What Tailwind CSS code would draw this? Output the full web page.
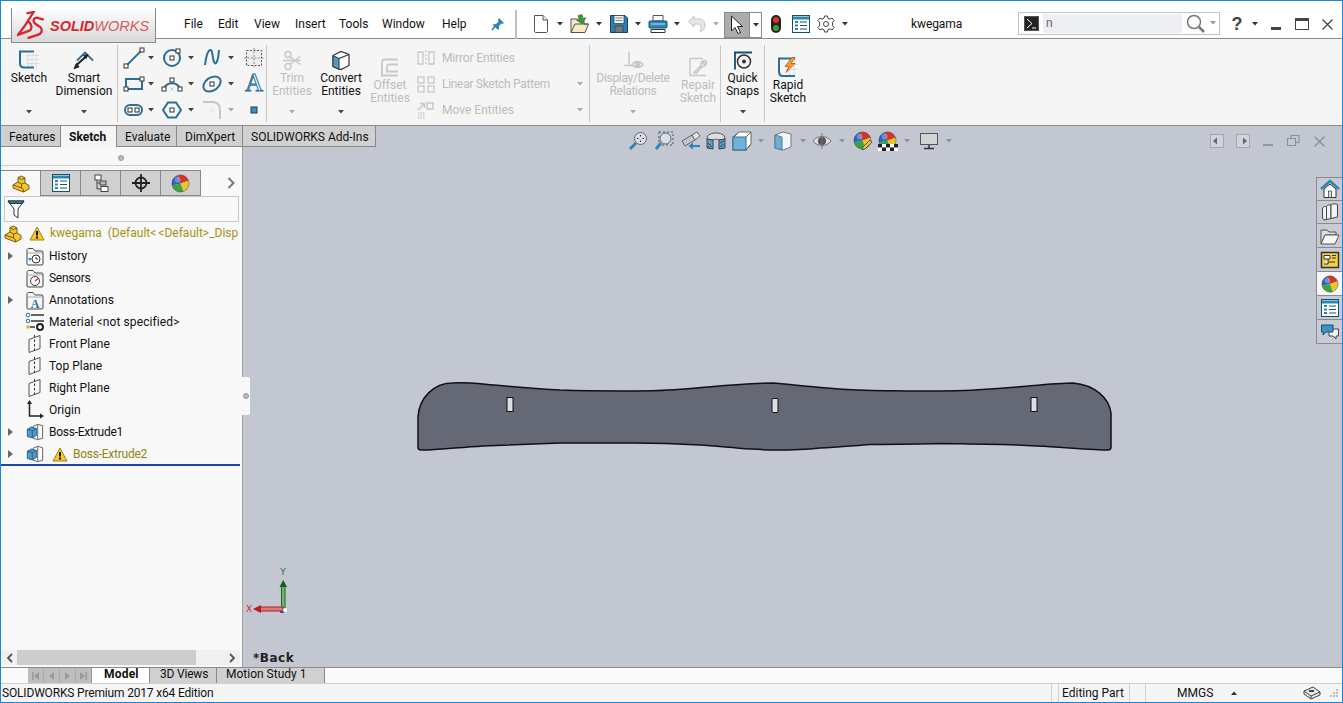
<!DOCTYPE html>
<html lang="en">
<head>
<meta charset="UTF-8" />
<title>SOLIDWORKS Premium 2017 x64 Edition</title>
<script src="https://cdn.jsdelivr.net/npm/@tailwindcss/browser@4"></script>
</head>
<body class="bg-white overflow-hidden">

<!-- shared icons -->
<svg class="hidden">
  <symbol id="caret" viewBox="0 0 6 4"><path d="M0 0H6L3 3.5Z" fill="currentColor"/></symbol>
  <symbol id="ball" viewBox="0 0 20 20">
    <path d="M10 10L1.200 12A9 9 0 0 1 7 1.500Z" fill="#2f62c4"/>
    <path d="M10 10L7 1.500A9 9 0 0 1 18.500 7Z" fill="#d5332c"/>
    <path d="M10 10L18.500 7A9 9 0 0 1 13 18.500Z" fill="#e8c828"/>
    <path d="M10 10L13 18.500A9 9 0 0 1 1.200 12Z" fill="#3ea33c"/>
    <circle cx="10" cy="10" r="9" fill="none" stroke="#333" stroke-opacity=".45"/>
    <circle cx="7" cy="6" r="3" fill="#fff" opacity=".3"/>
  </symbol>
  <symbol id="plane" viewBox="0 0 18 20"><path d="M3 5.500L14 1.500V14.500L3 18.500Z" fill="none" stroke="#555"/><path d="M8.500 1V19" stroke="#333" stroke-dasharray="2.500 2"/></symbol>
  <symbol id="boss" viewBox="0 0 20 20">
    <path d="M8 3.500L13 1.500L18.500 3V17L13 18.500L8 17Z" fill="#fff" stroke="#555"/><path d="M13 2V18" stroke="#555"/>
    <path d="M1.500 7L6 4.500L11.500 6V14L7 16.500L1.500 15Z" fill="#4f9cc8" stroke="#1f5b80"/><path d="M1.500 7L7 8.500L11.500 6M7 8.500V16.500" fill="none" stroke="#1f5b80"/>
  </symbol>
  <symbol id="warn" viewBox="0 0 16 15"><path d="M8 1L15 14H1Z" fill="#f6c928" stroke="#a5801a" stroke-linejoin="round"/><path d="M8 5V9.500" stroke="#111" stroke-width="2"/><path d="M8 10.500V12.500" stroke="#111" stroke-width="2"/></symbol>
  <symbol id="part" viewBox="0 0 18 18"><path d="M1 10L6 7V2.500L9.500 1L13 3V8L17 10.500V14L11.500 17L1 13Z" fill="#f3c62f" stroke="#7a5a10" stroke-linejoin="round"/><path d="M6 7L9.500 9L13 8M9.500 9V13L11.500 14.500V17M1 10L9.500 13M6 2.500L9.500 4.500L13 3" fill="none" stroke="#7a5a10"/></symbol>
  <symbol id="folder" viewBox="0 0 18 19"><path d="M1 3.500C1 2 2 1.500 3 1.500H7L9 4H16C16.500 4 17 4.500 17 5V17C17 17.500 16.500 18 16 18H2C1.500 18 1 17.500 1 17Z" fill="#f7f7f7" stroke="#444"/><path d="M2 6H16" stroke="#aaa"/></symbol>
  <symbol id="list" viewBox="0 0 18 18"><rect x=".5" y=".5" width="17" height="17" fill="#fff" stroke="#16506f"/><path d="M1 3H17" stroke="#2c86b5" stroke-width="3"/><path d="M3 7H6M3 10.500H6M3 14H6" stroke="#2c86b5" stroke-width="2"/><path d="M8 7H15M8 10.500H15M8 14H15" stroke="#16506f"/></symbol>
</svg>

<div class="relative w-[1343px] h-[703px] flex flex-col border border-[#1a86d8] overflow-hidden text-[12px] leading-[13px] text-[#111] font-['Roboto',sans-serif]">

  <!-- Logo tab -->
  <div class="absolute left-[10px] top-[7px] w-[145px] h-[35px] z-10 flex items-center border-x border-b border-[#8a8a8a] bg-gradient-to-b from-white to-[#d9d9d9] pl-[5px]">
    <svg class="w-[28px] h-[29px] shrink-0" viewBox="0 0 27 28" fill="none" stroke="#d7262c" stroke-width="2.200" stroke-linecap="round">
      <path d="M10 2L16 1L7 15L1 23L12 19C15 17 14.500 13 11 10"/>
      <path d="M25 8L19 6.500C15.500 7 15 10.500 18 12.500L23 16C25 19 23.500 22 20 23L11 26"/>
    </svg>
    <span class="ml-[5px] mt-[2px] text-[14.500px] leading-none italic text-[#d7262c] font-['Liberation_Sans',sans-serif] whitespace-nowrap"><b class="font-bold">SOLID</b><span class="text-[#d65b5e]">WORKS</span></span>
  </div>

  <!-- Title bar -->
  <header class="h-[38px] shrink-0 flex items-center border-b border-[#8c8c8c] bg-white pl-[183px] pt-[9px]">
    <nav class="flex">
      <span class="w-[34px]">File</span><span class="w-[36px]">Edit</span><span class="w-[41px]">View</span><span class="w-[44px]">Insert</span><span class="w-[43px]">Tools</span><span class="w-[60px]">Window</span><span class="w-[49px]">Help</span>
    </nav>
    <svg class="w-[14px] h-[14px] shrink-0" viewBox="0 0 14 14" fill="#2a86b8"><path d="M8 1L13 6L11.500 7L10.500 6.500L8 9V12L6.500 12.500L1.500 7.500L5 7L7.500 4.500L7 3Z"/><path d="M4 9L1 13" stroke="#2a86b8" stroke-width="1.500"/></svg>
    <div class="w-[2px] h-[29px] ml-[10px] bg-[#c0c0c0]"></div>

    <!-- New -->
    <svg class="w-[20px] h-[20px] ml-[14px] shrink-0" viewBox="0 0 20 20"><path d="M3.500 1.500H12L16.500 6V17C16.500 18 16 18.500 15 18.500H5C4 18.500 3.500 18 3.500 17Z" fill="#fff" stroke="#555"/><path d="M12 1.500V6H16.500" fill="#eee" stroke="#555"/></svg>
    <svg class="w-[6px] h-[4px] ml-[6px] mr-[7px] text-[#333] shrink-0"><use href="#caret"/></svg>
    <!-- Open -->
    <svg class="w-[20px] h-[20px] shrink-0" viewBox="0 0 20 20"><path d="M1 5H7L8.500 7H14V10H18.500L15 18.500H1Z" fill="#f5e9c6" stroke="#555"/><path d="M1 18.500L5 10H18.500" fill="none" stroke="#555"/><path d="M9 1H13V5H16L11 10L6.500 5H9Z" transform="rotate(-15 11 5)" fill="#3f9a2b" stroke="#24691b" stroke-width=".6"/></svg>
    <svg class="w-[6px] h-[4px] ml-[6px] mr-[7px] text-[#333] shrink-0"><use href="#caret"/></svg>
    <!-- Save -->
    <svg class="w-[20px] h-[20px] shrink-0" viewBox="0 0 20 20"><path d="M1.500 1.500H16L18.500 4V18.500H1.500Z" fill="#2f7fae" stroke="#15425e"/><rect x="5" y="1.500" width="10" height="8" fill="#f1f1f1" stroke="#15425e" stroke-width=".7"/><path d="M6.500 4H13.500M6.500 6.500H13.500" stroke="#888"/><rect x="6" y="12" width="8" height="6.500" fill="#777" stroke="#15425e" stroke-width=".7"/></svg>
    <svg class="w-[6px] h-[4px] ml-[6px] mr-[7px] text-[#333] shrink-0"><use href="#caret"/></svg>
    <!-- Print -->
    <svg class="w-[20px] h-[20px] shrink-0" viewBox="0 0 20 20"><path d="M5 1.500H15V7H5Z" fill="#fff" stroke="#555"/><rect x="1" y="7" width="18" height="7" rx="1" fill="#2f86b8" stroke="#17506f"/><path d="M3 15.500H17V18.500H3Z" fill="#fff" stroke="#333"/><path d="M3 10H17" stroke="#bfe0f0"/></svg>
    <svg class="w-[6px] h-[4px] ml-[6px] mr-[7px] text-[#333] shrink-0"><use href="#caret"/></svg>
    <!-- Undo, disabled -->
    <svg class="w-[20px] h-[20px] shrink-0" viewBox="0 0 20 20" fill="none"><path d="M7 5H12C16 5 18 8 18 11C18 14 16 17 13 17.500C15 14 14 10 11 10H7V13L1.500 7.500L7 2Z" fill="#e6e6e6" stroke="#c4c4c4"/></svg>
    <svg class="w-[6px] h-[4px] ml-[6px] text-[#aaa] shrink-0"><use href="#caret"/></svg>

    <!-- Select -->
    <div class="flex h-[26px] w-[38px] ml-[5px] mt-[1px] border border-[#8a8a8a] shrink-0">
      <div class="w-[25px] bg-[#acacac] flex items-center justify-center border-r border-[#8a8a8a]">
        <svg class="w-[14px] h-[20px]" viewBox="0 0 14 20"><path d="M1.500 1V16L5 12.500L8 18.500L10.500 17.500L7.500 11.500H12.500Z" fill="#fff" stroke="#222"/></svg>
      </div>
      <div class="flex-1 bg-white flex items-center justify-center"><svg class="w-[6px] h-[4px] text-[#333]"><use href="#caret"/></svg></div>
    </div>
    <!-- Rebuild light -->
    <svg class="w-[20px] h-[20px] ml-[4px] shrink-0" viewBox="0 0 20 20"><rect x="5" y="1" width="10" height="18" rx="5" fill="#222"/><circle cx="10" cy="6" r="3" fill="#e2312b"/><circle cx="10" cy="14" r="3" fill="#3d9c33"/></svg>
    <svg class="w-[18px] h-[18px] ml-[6px] shrink-0"><use href="#list"/></svg>
    <!-- Options gear -->
    <svg class="w-[18px] h-[18px] ml-[7px] shrink-0" viewBox="0 0 18 18" fill="none" stroke="#444"><circle cx="9" cy="9" r="2.500"/><path d="M7.500 1H10.500L11 3.300L13 4.200L15 3L17 5.500L15.500 7.300V10.700L17 12.500L15 15L13 13.800L11 14.700L10.500 17H7.500L7 14.700L5 13.800L3 15L1 12.500L2.500 10.700V7.300L1 5.500L3 3L5 4.200L7 3.300Z" stroke-linejoin="round"/></svg>
    <svg class="w-[6px] h-[4px] ml-[7px] text-[#333] shrink-0"><use href="#caret"/></svg>

    <span class="w-[49px] ml-[63px] shrink-0 tracking-[-0.1px]">kwegama</span>

    <!-- Search -->
    <div class="w-[202px] h-[23px] ml-[58px] mb-[2px] flex items-center border border-[#c4c4c4] pl-[5px] shrink-0">
      <div class="w-[15px] h-[15px] bg-[#222] border border-[#555] flex items-center justify-center">
        <svg class="w-[13px] h-[13px]" viewBox="0 0 13 13" fill="none" stroke="#fff"><path d="M2 2L7 6.500L2 11"/><path d="M7 11H11"/></svg>
      </div>
      <div class="w-[139px] h-[19px] ml-[4px] bg-[#eceef2] pl-[3px] text-[#666] leading-[18px]">n</div>
      <svg class="w-[19px] h-[19px] ml-[4px]" viewBox="0 0 19 19" fill="none" stroke="#777"><circle cx="8" cy="8" r="6.500" stroke-width="1.500"/><path d="M13 13L18 18" stroke-width="2.500"/></svg>
      <svg class="w-[6px] h-[4px] ml-[5px] text-[#999]"><use href="#caret"/></svg>
    </div>
    <span class="w-[18px] ml-[8px] text-center text-[18px] leading-none font-bold text-[#444] font-['Liberation_Sans',sans-serif] shrink-0">?</span>
    <svg class="w-[6px] h-[4px] ml-[6px] text-[#333] shrink-0"><use href="#caret"/></svg>
    <div class="w-[10px] h-[3px] ml-[13px] mt-[9px] bg-[#444] shrink-0"></div>
    <div class="w-[14px] h-[12px] ml-[14px] border border-[#444] border-t-[3px] shrink-0"></div>
    <svg class="w-[11px] h-[11px] ml-[13px] shrink-0" viewBox="0 0 11 11" stroke="#444" stroke-width="1.300"><path d="M.5 .5L10.500 10.500M10.500 .5L.5 10.500"/></svg>
  </header>

  <!-- Ribbon -->
  <section class="h-[87px] shrink-0 flex border-b border-[#8c8c8c] bg-[#f5f5f5]">

    <div class="w-[56px] flex flex-col items-center pt-[10px]">
      <svg class="w-[22px] h-[23px] shrink-0" viewBox="0 0 22 22" fill="none"><path d="M8 6H21M8 10H21M8 14H21M10 4V19M14 4V19M18 4V19" stroke="#dcdcdc"/><path d="M16 2H2V14C2 16.500 3.500 18 6 18H16" stroke="#2a6f96" stroke-width="2"/></svg>
      <span>Sketch</span>
      <svg class="w-[6px] h-[4px] mt-auto mb-[11px] text-[#444]"><use href="#caret"/></svg>
    </div>
    <div class="w-[54px] flex flex-col items-center pt-[10px] text-center">
      <svg class="w-[22px] h-[23px] shrink-0" viewBox="0 0 22 22" fill="none"><path d="M4 11L12 3L20 11" stroke="#2a6f96" stroke-width="1.800"/><path d="M3 16L13 7" stroke="#222" stroke-width="2"/><path d="M1 19L6 17.500L3.500 14ZM15 5L10.500 6L13 9Z" fill="#222" stroke="#222"/></svg>
      <span>Smart<br>Dimension</span>
      <svg class="w-[6px] h-[4px] mt-auto mb-[11px] text-[#444]"><use href="#caret"/></svg>
    </div>
    <div class="w-[1px] h-[77px] ml-[6px] mt-[6px] bg-[#c8c8c8]"></div>

    <!-- Sketch entities -->
    <div class="grid grid-cols-[42px_40px_40px_26px] grid-rows-[27px_26px_26px] pt-[5px]">
      <div class="flex items-center pl-[5px]">
        <svg class="w-[22px] h-[22px]" viewBox="0 0 22 22" fill="none"><path d="M3 19L19 3" stroke="#2a6f96" stroke-width="1.800"/><rect x="1" y="17" width="4" height="4" fill="#fff" stroke="#333"/><rect x="17" y="1" width="4" height="4" fill="#fff" stroke="#333"/></svg>
        <svg class="w-[6px] h-[4px] ml-[3px] text-[#444]"><use href="#caret"/></svg>
      </div>
      <div class="flex items-center pl-[1px]">
        <svg class="w-[22px] h-[22px]" viewBox="0 0 22 22" fill="none"><circle cx="11" cy="11" r="8" stroke="#2a6f96" stroke-width="2"/><rect x="9" y="9" width="4" height="4" fill="#fff" stroke="#333"/><rect x="15" y="2" width="4" height="4" fill="#fff" stroke="#333"/></svg>
        <svg class="w-[6px] h-[4px] ml-[5px] text-[#444]"><use href="#caret"/></svg>
      </div>
      <div class="flex items-center pl-[1px]">
        <svg class="w-[22px] h-[22px]" viewBox="0 0 22 22" fill="none"><path d="M4 18C5 10 6 4 9 3C12 2 11 10 13 15C14 18 17 17 18 3" stroke="#2a6f96" stroke-width="2"/></svg>
        <svg class="w-[6px] h-[4px] ml-[5px] text-[#444]"><use href="#caret"/></svg>
      </div>
      <div class="flex items-center pl-[3px]">
        <svg class="w-[22px] h-[22px]" viewBox="0 0 22 22" fill="none" stroke="#555" stroke-dasharray="2 1.500"><rect x="3.500" y="3.500" width="15" height="15" fill="#eee"/><path d="M11 1V21M1 11H21" stroke="#888"/></svg>
      </div>

      <div class="flex items-center pl-[5px]">
        <svg class="w-[22px] h-[22px]" viewBox="0 0 22 22" fill="none"><rect x="3" y="6" width="16" height="10" stroke="#2a6f96" stroke-width="2"/><rect x="1" y="14" width="4" height="4" fill="#fff" stroke="#333"/><rect x="17" y="4" width="4" height="4" fill="#fff" stroke="#333"/></svg>
        <svg class="w-[6px] h-[4px] ml-[3px] text-[#444]"><use href="#caret"/></svg>
      </div>
      <div class="flex items-center pl-[1px]">
        <svg class="w-[22px] h-[22px]" viewBox="0 0 22 22" fill="none"><path d="M3 16A8.500 8.500 0 0 1 19 16" stroke="#2a6f96" stroke-width="2"/><path d="M9.500 14.500L12.500 17.500M12.500 14.500L9.500 17.500" stroke="#ccc"/><rect x="1" y="14" width="4" height="4" fill="#fff" stroke="#333"/><rect x="9" y="5" width="4" height="4" fill="#fff" stroke="#333"/><rect x="17" y="14" width="4" height="4" fill="#fff" stroke="#333"/></svg>
        <svg class="w-[6px] h-[4px] ml-[5px] text-[#444]"><use href="#caret"/></svg>
      </div>
      <div class="flex items-center pl-[1px]">
        <svg class="w-[22px] h-[22px]" viewBox="0 0 22 22" fill="none"><ellipse cx="11" cy="11" rx="9.500" ry="6.500" transform="rotate(-35 11 11)" stroke="#2a6f96" stroke-width="2"/><rect x="9" y="9" width="4" height="4" fill="#fff" stroke="#333"/></svg>
        <svg class="w-[6px] h-[4px] ml-[5px] text-[#444]"><use href="#caret"/></svg>
      </div>
      <div class="flex items-center pl-[3px]">
        <svg class="w-[22px] h-[22px] overflow-visible" viewBox="0 0 22 22"><text x="11" y="18" text-anchor="middle" font-size="25" font-family="Liberation Serif" fill="#fff" stroke="#2a6f96" stroke-width="1">A</text></svg>
      </div>

      <div class="flex items-center pl-[5px]">
        <svg class="w-[22px] h-[22px]" viewBox="0 0 22 22" fill="none"><rect x="2" y="6" width="17" height="10" rx="5" stroke="#2a6f96" stroke-width="2"/><rect x="5" y="9" width="4" height="4" fill="#fff" stroke="#333"/><rect x="12" y="9" width="4" height="4" fill="#fff" stroke="#333"/></svg>
        <svg class="w-[6px] h-[4px] ml-[3px] text-[#444]"><use href="#caret"/></svg>
      </div>
      <div class="flex items-center pl-[1px]">
        <svg class="w-[22px] h-[22px]" viewBox="0 0 22 22" fill="none"><path d="M7 3.500H15L20 11L15 18.500H7L2 11Z" stroke="#2a6f96" stroke-width="2"/><rect x="9" y="9" width="4" height="4" fill="#fff" stroke="#333"/></svg>
        <svg class="w-[6px] h-[4px] ml-[5px] text-[#444]"><use href="#caret"/></svg>
      </div>
      <div class="flex items-center pl-[1px]">
        <svg class="w-[22px] h-[22px]" viewBox="0 0 22 22" fill="none"><path d="M2 3H11C16 3 19 6 19 11V20" stroke="#c6c6c6" stroke-width="2"/><path d="M9 10L12 13M12 10L9 13" stroke="#ddd"/></svg>
        <svg class="w-[6px] h-[4px] ml-[5px] text-[#aaa]"><use href="#caret"/></svg>
      </div>
      <div class="flex items-center pl-[3px]">
        <svg class="w-[22px] h-[22px]" viewBox="0 0 22 22"><rect x="8" y="8" width="6" height="6" fill="#3b8fc0" stroke="#163f5a"/></svg>
      </div>
    </div>
    <div class="w-[1px] h-[77px] mt-[6px] bg-[#c8c8c8]"></div>

    <div class="w-[50px] flex flex-col items-center pt-[10px] text-center text-[#bcbcbc]">
      <svg class="w-[22px] h-[23px] shrink-0" viewBox="0 0 22 22" fill="none" stroke="#c8c8c8" stroke-width="1.500"><circle cx="7" cy="5" r="3"/><circle cx="7" cy="17" r="3"/><path d="M9 7L19 15M9 15L19 7M2 11H20" /></svg>
      <span>Trim<br>Entities</span>
      <svg class="w-[6px] h-[4px] mt-auto mb-[11px] text-[#aaa]"><use href="#caret"/></svg>
    </div>
    <div class="w-[48px] flex flex-col items-center pt-[10px] text-center">
      <svg class="w-[22px] h-[23px] shrink-0" viewBox="0 0 22 22"><path d="M3 6L11 2L19 5V16L11 20L3 17Z" fill="#fff" stroke="#333" stroke-width="1.200"/><path d="M3 6L9 9V20L3 17Z" fill="#4f9cc8" stroke="#333" stroke-width="1"/><path d="M9 9L19 5" stroke="#333" stroke-width="1.200"/></svg>
      <span>Convert<br>Entities</span>
      <svg class="w-[6px] h-[4px] mt-auto mb-[11px] text-[#444]"><use href="#caret"/></svg>
    </div>
    <div class="w-[50px] flex flex-col items-center pt-[17px] text-center text-[#bcbcbc]">
      <svg class="w-[22px] h-[23px] shrink-0" viewBox="0 0 22 22" fill="none" stroke="#c8c8c8" stroke-width="1.800"><path d="M19 3H6C4 3 3 4 3 6V19H19"/><path d="M19 8H10C9 8 8 9 8 10V15H19"/></svg>
      <span>Offset<br>Entities</span>
    </div>

    <!-- Mirror / pattern / move -->
    <div class="w-[174px] flex flex-col pt-[6px] text-[#bcbcbc]">
      <div class="flex items-center h-[26px] pl-[2px]">
        <svg class="w-[18px] h-[18px] shrink-0" viewBox="0 0 18 18" fill="none" stroke="#c8c8c8" stroke-width="1.300"><path d="M1 3H6V15H1ZM12 3H17V15H12Z"/><path d="M9 1V17" stroke-dasharray="2 2"/></svg>
        <span class="ml-[7px] tracking-[-0.15px]">Mirror Entities</span>
      </div>
      <div class="flex items-center h-[26px] pl-[2px]">
        <svg class="w-[18px] h-[18px] shrink-0" viewBox="0 0 18 18" fill="none" stroke="#c8c8c8" stroke-width="1.300"><rect x="1" y="2" width="6" height="6"/><rect x="11" y="2" width="6" height="6"/><rect x="1" y="11" width="6" height="6"/><rect x="11" y="11" width="6" height="6"/></svg>
        <span class="ml-[7px] tracking-[-0.3px]">Linear Sketch Pattern</span>
        <svg class="w-[6px] h-[4px] ml-auto mr-[6px] text-[#aaa]"><use href="#caret"/></svg>
      </div>
      <div class="flex items-center h-[26px] pl-[2px]">
        <svg class="w-[18px] h-[18px] shrink-0" viewBox="0 0 18 18" fill="none" stroke="#c8c8c8" stroke-width="1.500"><rect x="10" y="2" width="6" height="6"/><path d="M1 9L7 3M3 2.500H7.500V7"/><path d="M1 12H8M1 14.500H8M1 17H8" stroke-dasharray="1.500 1"/></svg>
        <span class="ml-[7px]">Move Entities</span>
        <svg class="w-[6px] h-[4px] ml-auto mr-[6px] text-[#aaa]"><use href="#caret"/></svg>
      </div>
    </div>
    <div class="w-[1px] h-[77px] mt-[6px] bg-[#c8c8c8]"></div>

    <div class="w-[86px] flex flex-col items-center pt-[10px] text-center text-[#bcbcbc]">
      <svg class="w-[22px] h-[23px] shrink-0" viewBox="0 0 22 22" fill="none" stroke="#c8c8c8" stroke-width="1.500"><path d="M7 2V15M2 16H12"/><path d="M10 15C13 11 18 11 21 15C18 19 13 19 10 15Z"/><circle cx="15.500" cy="15" r="2" fill="#c8c8c8"/></svg>
      <span class="tracking-[-0.3px]">Display/Delete<br>Relations</span>
      <svg class="w-[6px] h-[4px] mt-auto mb-[11px] text-[#aaa]"><use href="#caret"/></svg>
    </div>
    <div class="w-[44px] flex flex-col items-center pt-[17px] text-center text-[#bcbcbc]">
      <svg class="w-[22px] h-[23px] shrink-0" viewBox="0 0 22 22" fill="none" stroke="#c8c8c8" stroke-width="1.500"><path d="M16 2H3V19H19"/><path d="M7 16L14 9C13 6 15 4 18 4L15.500 6.500L17 8L19.500 5.500C20 8 17 11 15 10L9 17Z" fill="#f5f5f5"/></svg>
      <span>Repair<br>Sketch</span>
    </div>
    <div class="w-[1px] h-[77px] mt-[6px] bg-[#c8c8c8]"></div>

    <div class="w-[43px] flex flex-col items-center pt-[10px] text-center">
      <svg class="w-[22px] h-[23px] shrink-0" viewBox="0 0 22 22" fill="none"><path d="M2 3H20M3 3V20" stroke="#14506f" stroke-width="1.800"/><circle cx="12" cy="12" r="6.500" stroke="#333" stroke-width="1.500"/><circle cx="12" cy="12" r="2" fill="#333"/></svg>
      <span>Quick<br>Snaps</span>
      <svg class="w-[6px] h-[4px] mt-auto mb-[11px] text-[#444]"><use href="#caret"/></svg>
    </div>
    <div class="w-[1px] h-[77px] mt-[6px] bg-[#c8c8c8]"></div>

    <div class="w-[46px] flex flex-col items-center pt-[17px] text-center">
      <svg class="w-[22px] h-[23px] shrink-0" viewBox="0 0 22 22" fill="none"><path d="M8 8H21M8 13H21M12 4V20M17 4V20" stroke="#dcdcdc"/><path d="M18 2H2V15C2 18 3.500 19.500 6 19.500H18" stroke="#2a6f96" stroke-width="2"/><path d="M15 1L8 10H12L9 16L18 7H14L18 1Z" fill="#f6a51f" stroke="#c0381f" stroke-width=".7"/></svg>
      <span>Rapid<br>Sketch</span>
    </div>
  </section>

  <!-- Main area -->
  <main class="relative h-[541px] shrink-0 flex">

    <!-- Command manager tabs -->
    <div class="absolute left-0 top-0 z-10 h-[21px] flex leading-[22px]">
      <div class="w-[60px] pl-[8px] bg-[#d0d0d0] border-r border-b border-[#888]">Features</div>
      <div class="w-[56px] pl-[8px] bg-[#f5f5f5] border-r border-[#888] font-bold">Sketch</div>
      <div class="w-[60px] pl-[8px] bg-[#d0d0d0] border-r border-b border-[#888]">Evaluate</div>
      <div class="w-[66px] pl-[8px] bg-[#d0d0d0] border-r border-b border-[#888]">DimXpert</div>
      <div class="w-[133px] pl-[8px] bg-[#d0d0d0] border-r border-b border-[#888]">SOLIDWORKS Add-Ins</div>
    </div>

    <!-- FeatureManager panel -->
    <aside class="w-[242px] shrink-0 flex flex-col pt-[21px] bg-[#f8f8f8] border-r border-[#a0a0a0]">
      <div class="h-[19px] w-[239px] flex items-center justify-center border-b border-[#cfcfcf] shrink-0">
        <div class="w-[6px] h-[6px] mt-[3px] rounded-full bg-[#bbb] border border-[#999]"></div>
      </div>
      <div class="flex items-center h-[26px] mt-[4px] shrink-0">
        <div class="w-[40px] h-full flex items-center justify-center bg-[#f8f8f8] border-t border-r border-[#888]"><svg class="w-[18px] h-[18px]"><use href="#part"/></svg></div>
        <div class="w-[40px] h-full flex items-center justify-center bg-[#d0d0d0] border-y border-r border-[#888]"><svg class="w-[18px] h-[18px]"><use href="#list"/></svg></div>
        <div class="w-[40px] h-full flex items-center justify-center bg-[#d0d0d0] border-y border-r border-[#888]">
          <svg class="w-[18px] h-[18px]" viewBox="0 0 18 18" fill="none" stroke="#444"><rect x="3" y="1" width="6" height="5" fill="#fff"/><rect x="8" y="7" width="6" height="4" fill="#bbb"/><rect x="9" y="12.500" width="7" height="5" fill="#fff"/><path d="M5 6V15H9M5 9H8"/></svg>
        </div>
        <div class="w-[40px] h-full flex items-center justify-center bg-[#d0d0d0] border-y border-r border-[#888]">
          <svg class="w-[18px] h-[18px]" viewBox="0 0 18 18" fill="none" stroke="#222" stroke-width="1.800"><circle cx="9" cy="9" r="5.500"/><path d="M9 0V18M0 9H18"/></svg>
        </div>
        <div class="w-[40px] h-full flex items-center justify-center bg-[#d0d0d0] border-y border-r border-[#888]"><svg class="w-[19px] h-[19px]"><use href="#ball"/></svg></div>
        <svg class="w-[8px] h-[12px] ml-[26px]" viewBox="0 0 8 12" fill="none" stroke="#777" stroke-width="2"><path d="M1.500 1L6.500 6L1.500 11"/></svg>
      </div>
      <div class="w-[235px] h-[26px] ml-[3px] flex items-center border border-[#c8c8c8] pl-[2px] shrink-0">
        <svg class="w-[18px] h-[20px]" viewBox="0 0 18 20" fill="#fff" stroke="#333"><path d="M1 2H17L11 10V19L7 16V10Z"/><path d="M1 2H17L15.500 4.500H2.500Z" fill="#2a86b8"/></svg>
      </div>

      <!-- Tree -->
      <div class="flex flex-col whitespace-nowrap overflow-hidden">
        <div class="h-[23px] flex items-center text-[#a39512] pl-[3px]">
          <svg class="w-[18px] h-[18px] shrink-0"><use href="#part"/></svg>
          <svg class="w-[16px] h-[15px] ml-[7px] shrink-0"><use href="#warn"/></svg>
          <span class="ml-[5px]">kwegama&nbsp; (Default<span class="mr-[2px]">&lt;</span>&lt;Default&gt;_Disp</span>
        </div>
        <div class="h-[22px] flex items-center">
          <svg class="w-[5px] h-[8px] ml-[7px] text-[#666] shrink-0" viewBox="0 0 5 8"><path d="M0 0L5 4L0 8Z" fill="currentColor"/></svg>
          <svg class="w-[18px] h-[19px] ml-[13px] shrink-0" viewBox="0 0 18 19"><use href="#folder"/><circle cx="10" cy="12" r="4" fill="#fff" stroke="#333"/><path d="M10 10V12H12" stroke="#333" fill="none"/><path d="M2 11H6L4 14Z" fill="#2a86b8"/></svg>
          <span class="ml-[5px]">History</span>
        </div>
        <div class="h-[22px] flex items-center">
          <svg class="w-[18px] h-[19px] ml-[25px] shrink-0" viewBox="0 0 18 19"><use href="#folder"/><circle cx="9" cy="12" r="4.500" fill="#fff" stroke="#333"/><path d="M9 12L12 9.500" stroke="#d5332c" stroke-width="1.500"/></svg>
          <span class="ml-[5px] tracking-[-0.3px]">Sensors</span>
        </div>
        <div class="h-[22px] flex items-center">
          <svg class="w-[5px] h-[8px] ml-[7px] text-[#666] shrink-0" viewBox="0 0 5 8"><path d="M0 0L5 4L0 8Z" fill="currentColor"/></svg>
          <svg class="w-[18px] h-[19px] ml-[13px] shrink-0" viewBox="0 0 18 19"><use href="#folder"/><text x="9" y="17" text-anchor="middle" font-size="12" font-family="Liberation Serif" font-weight="bold" fill="#2a6f96">A</text></svg>
          <span class="ml-[5px]">Annotations</span>
        </div>
        <div class="h-[22px] flex items-center">
          <svg class="w-[20px] h-[20px] ml-[24px] shrink-0" viewBox="0 0 20 20"><path d="M6 3H19M6 9H19" stroke="#333" stroke-width="1.500"/><circle cx="3" cy="3" r="1.800" fill="#fff" stroke="#2a6f96"/><circle cx="3" cy="9" r="1.800" fill="#fff" stroke="#2a6f96"/><circle cx="3" cy="15" r="1.800" fill="#e3b520"/><path d="M5 15H10" stroke="#333" stroke-width="1.500"/><circle cx="15" cy="15" r="3" fill="#fff" stroke="#222" stroke-width="2"/></svg>
          <span class="ml-[4px] tracking-[0.1px]">Material &lt;not specified&gt;</span>
        </div>
        <div class="h-[22px] flex items-center"><svg class="w-[18px] h-[20px] ml-[25px] shrink-0"><use href="#plane"/></svg><span class="ml-[5px]">Front Plane</span></div>
        <div class="h-[22px] flex items-center"><svg class="w-[18px] h-[20px] ml-[25px] shrink-0"><use href="#plane"/></svg><span class="ml-[5px]">Top Plane</span></div>
        <div class="h-[22px] flex items-center"><svg class="w-[18px] h-[20px] ml-[25px] shrink-0"><use href="#plane"/></svg><span class="ml-[5px]">Right Plane</span></div>
        <div class="h-[22px] flex items-center">
          <svg class="w-[18px] h-[20px] ml-[25px] shrink-0" viewBox="0 0 18 20" fill="#222"><path d="M3.500 3V16H15" fill="none" stroke="#222" stroke-width="1.500"/><path d="M3.500 0L6 4H1ZM18 16L14 18.500V13.500Z"/></svg>
          <span class="ml-[5px]">Origin</span>
        </div>
        <div class="h-[22px] flex items-center">
          <svg class="w-[5px] h-[8px] ml-[7px] text-[#666] shrink-0" viewBox="0 0 5 8"><path d="M0 0L5 4L0 8Z" fill="currentColor"/></svg>
          <svg class="w-[18px] h-[18px] ml-[13px] shrink-0"><use href="#boss"/></svg>
          <span class="ml-[5px] tracking-[-0.25px]">Boss-Extrude1</span>
        </div>
        <div class="h-[22px] flex items-center text-[#8f8410]">
          <svg class="w-[5px] h-[8px] ml-[7px] text-[#666] shrink-0" viewBox="0 0 5 8"><path d="M0 0L5 4L0 8Z" fill="currentColor"/></svg>
          <svg class="w-[18px] h-[18px] ml-[13px] shrink-0"><use href="#boss"/></svg>
          <svg class="w-[16px] h-[15px] ml-[8px] shrink-0"><use href="#warn"/></svg>
          <span class="ml-[5px] tracking-[-0.25px]">Boss-Extrude2</span>
        </div>
        <div class="w-[239px] h-[2px] mt-[-1px] bg-[#1c46a8]"></div>
      </div>

      <!-- Horizontal scrollbar -->
      <div class="w-[239px] h-[15px] mt-auto mb-[2px] flex items-center bg-[#f0f0f0] shrink-0">
        <svg class="w-[8px] h-[10px] ml-[5px] shrink-0" viewBox="0 0 8 10" fill="none" stroke="#555" stroke-width="1.800"><path d="M6 1L2 5L6 9"/></svg>
        <div class="w-[179px] h-full ml-[3px] bg-[#cdcdcd]"></div>
        <svg class="w-[8px] h-[10px] ml-auto mr-[4px] shrink-0" viewBox="0 0 8 10" fill="none" stroke="#555" stroke-width="1.800"><path d="M2 1L6 5L2 9"/></svg>
      </div>
    </aside>

    <!-- Graphics area -->
    <div class="relative flex-1 bg-[#c3c7d2]">
      <!-- splitter handle -->
      <div class="absolute left-[-1px] top-[251px] w-[8px] h-[38px] flex items-center justify-center bg-[#f8f8f8] rounded-r-[2px]">
        <div class="w-[6px] h-[6px] rounded-full bg-[#bbb] border border-[#999]"></div>
      </div>

      <!-- Heads-up view toolbar -->
      <div class="absolute left-[385px] top-[5px] h-[20px] flex items-center">
        <svg class="w-[20px] h-[20px] shrink-0" viewBox="0 0 20 20" fill="none"><circle cx="12.500" cy="7.500" r="6" fill="#d8dde6" stroke="#666"/><path d="M12.500 4V5.500M12.500 9.500V11M9 7.500H10.500M14.500 7.500H16" stroke="#333"/><path d="M8 12L2 18" stroke="#2a86b8" stroke-width="3"/></svg>
        <svg class="w-[20px] h-[20px] ml-[6px] shrink-0" viewBox="0 0 20 20" fill="none"><rect x="5" y="1" width="14" height="13" stroke="#555" stroke-dasharray="2 2"/><circle cx="11.500" cy="7.500" r="5.500" fill="#d8dde6" stroke="#666"/><path d="M7 12L2 18" stroke="#2a86b8" stroke-width="3"/></svg>
        <svg class="w-[20px] h-[20px] ml-[7px] shrink-0" viewBox="0 0 20 20"><path d="M1 10L11 4L14 9L4 15Z" fill="#c4c4c4" stroke="#666"/><path d="M11 4L16 1L19 5L14 9Z" fill="#e6e6e6" stroke="#666"/><path d="M19 14H12V11.500L7.500 15L12 18.500V16H19Z" fill="#2a86b8"/></svg>
        <svg class="w-[20px] h-[20px] ml-[5px] shrink-0" viewBox="0 0 20 20"><path d="M1 8C1 3 6 2 10 2C14 2 19 3 19 8L13 9C11 8 9 8 7 9Z" fill="#ddd" stroke="#555"/><path d="M1 8L7 9V18L1 17ZM13 9L19 8V17L13 18Z" fill="#5b9dc6" stroke="#444"/><path d="M2 12L6 16M2 15L5 18M14 12L18 10M14 16L18 13" stroke="#23516e"/></svg>
        <svg class="w-[20px] h-[20px] ml-[6px] shrink-0" viewBox="0 0 20 20"><path d="M7 1H19V13L14 19H1V7Z" fill="#fff" stroke="#666"/><rect x="1" y="6" width="13" height="13" fill="#72b2d8" stroke="#2f6a8c"/><path d="M1 6L7 1M14 6L19 1M14 19L19 13" stroke="#666"/></svg>
        <svg class="w-[6px] h-[4px] ml-[6px] text-[#8f939c] shrink-0"><use href="#caret"/></svg>
        <svg class="w-[20px] h-[20px] ml-[9px] shrink-0" viewBox="0 0 20 20"><path d="M2 4L10 1L18 3V16L10 19L2 17Z" fill="#f5f5f5" stroke="#777"/><path d="M2 4L9 6V19L2 17Z" fill="#6eaed4" stroke="#4a7f9f"/></svg>
        <svg class="w-[6px] h-[4px] ml-[7px] text-[#8f939c] shrink-0"><use href="#caret"/></svg>
        <svg class="w-[20px] h-[20px] ml-[6px] shrink-0" viewBox="0 0 20 20"><path d="M1 10C5 4 15 4 19 10C15 16 5 16 1 10Z" fill="#ddd" stroke="#777"/><circle cx="10" cy="10" r="4" fill="#555"/><path d="M10 2V18" stroke="#777"/></svg>
        <svg class="w-[6px] h-[4px] ml-[7px] text-[#8f939c] shrink-0"><use href="#caret"/></svg>
        <div class="relative w-[20px] h-[20px] ml-[8px] shrink-0">
          <svg class="w-[19px] h-[19px]" viewBox="0 0 20 20"><use href="#ball"/></svg>
          <svg class="absolute left-[8px] top-[8px] w-[12px] h-[12px]" viewBox="0 0 12 12"><path d="M9 1L11 3L4 10L1 11L2 8Z" fill="#f0c040" stroke="#555"/></svg>
        </div>
        <div class="relative w-[20px] h-[20px] ml-[5px] shrink-0">
          <svg class="w-[19px] h-[19px]" viewBox="0 0 20 20"><use href="#ball"/></svg>
          <svg class="absolute left-0 top-[13px] w-[20px] h-[7px]" viewBox="0 0 20 7"><rect width="20" height="7" fill="#fff"/><path d="M0 0H4V3.500H0ZM8 0H12V3.500H8ZM16 0H20V3.500H16ZM4 3.500H8V7H4ZM12 3.500H16V7H12Z" fill="#222"/></svg>
        </div>
        <svg class="w-[6px] h-[4px] ml-[6px] text-[#8f939c] shrink-0"><use href="#caret"/></svg>
        <svg class="w-[20px] h-[20px] ml-[9px] shrink-0" viewBox="0 0 20 20"><rect x="1.500" y="2.500" width="17" height="11" fill="#d4d4d4" stroke="#555"/><path d="M10 14V17M5 17.500H15" stroke="#333" stroke-width="1.500"/></svg>
        <svg class="w-[6px] h-[4px] ml-[7px] text-[#8f939c] shrink-0"><use href="#caret"/></svg>
      </div>

      <!-- View window controls -->
      <div class="absolute left-[967px] top-[8px] h-[14px] flex items-center">
        <svg class="w-[14px] h-[14px] shrink-0" viewBox="0 0 14 14"><rect x=".5" y=".5" width="13" height="13" fill="#d0d3da" stroke="#a4a7ae"/><path d="M3 7L7 3.500V10.500Z" fill="#666"/></svg>
        <svg class="w-[14px] h-[14px] ml-[12px] shrink-0" viewBox="0 0 14 14"><rect x=".5" y=".5" width="13" height="13" fill="#d0d3da" stroke="#a4a7ae"/><path d="M11 7L7 3.500V10.500Z" fill="#666"/></svg>
        <div class="w-[10px] h-[2px] ml-[13px] mt-[8px] bg-[#9296a0] shrink-0"></div>
        <svg class="w-[13px] h-[12px] ml-[14px] shrink-0" viewBox="0 0 13 12" fill="#c3c7d2" stroke="#8a8e98"><rect x="4" y=".5" width="8" height="7"/><rect x=".5" y="3.500" width="8" height="7"/></svg>
        <svg class="w-[11px] h-[11px] ml-[14px] shrink-0" viewBox="0 0 11 11" stroke="#8a8e98" stroke-width="1.300"><path d="M.5 .5L10.500 10.500M10.500 .5L.5 10.500"/></svg>
      </div>

      <!-- Task pane tabs -->
      <div class="absolute right-0 top-[51px] w-[26px] flex flex-col border-l border-t border-[#8a8a8a]">
        <div class="h-[23px] flex items-center justify-center bg-[#c8cbd4] border-b border-[#8a8a8a]">
          <svg class="w-[20px] h-[20px]" viewBox="0 0 20 20"><path d="M1 10L10 2L19 10" fill="none" stroke="#2a86b8" stroke-width="2.500"/><path d="M4 10V18.500H16V10L10 5Z" fill="#fff" stroke="#333"/><rect x="8.500" y="12" width="3" height="6.500" fill="#ddd" stroke="#333" stroke-width=".7"/></svg>
        </div>
        <div class="h-[23px] flex items-center justify-center bg-[#c8cbd4] border-b border-[#8a8a8a]">
          <svg class="w-[20px] h-[20px]" viewBox="0 0 20 20" fill="#f3f3f3" stroke="#444"><path d="M2.500 6C3 5 5 4 6.500 4.500V17.500L4 18L2.500 16Z"/><path d="M6.500 4.500C7 3 10 2.500 11 3V16.500L6.500 17.500Z"/><path d="M11 3C12 1.500 16 1.500 17.500 2.500V15L11 16.500Z"/></svg>
        </div>
        <div class="h-[24px] flex items-center justify-center bg-[#c8cbd4] border-b border-[#8a8a8a]">
          <svg class="w-[20px] h-[20px]" viewBox="0 0 20 20"><path d="M1 4H7L9 6H16V9H5L1 18Z" fill="#ddd" stroke="#555"/><path d="M1 18L5 9H19L15 18Z" fill="#f7f7f7" stroke="#555"/></svg>
        </div>
        <div class="h-[24px] flex items-center justify-center bg-[#c8cbd4] border-b border-[#8a8a8a]">
          <svg class="w-[20px] h-[20px]" viewBox="0 0 20 20"><rect x="1.500" y="2.500" width="17" height="15" fill="#f3d048" stroke="#333" stroke-width="1.500"/><path d="M4 5.500H10V9H4ZM12 5.500H16M12 8H16M8 9V14H4M8 12H15" fill="#fff" stroke="#333"/></svg>
        </div>
        <div class="h-[24px] flex items-center justify-center bg-[#f6f6f6] border-b border-[#8a8a8a]"><svg class="w-[18px] h-[18px]" viewBox="0 0 20 20"><use href="#ball"/></svg></div>
        <div class="h-[24px] flex items-center justify-center bg-[#c8cbd4] border-b border-[#8a8a8a]"><svg class="w-[18px] h-[18px]"><use href="#list"/></svg></div>
        <div class="h-[24px] flex items-center justify-center bg-[#c8cbd4] border-b border-[#8a8a8a]">
          <svg class="w-[20px] h-[20px]" viewBox="0 0 20 20"><path d="M9 7H18.500V14H16V17L13 14H9Z" fill="#f3f3f3" stroke="#444"/><path d="M1.500 3H13V10H6L3 13V10H1.500Z" fill="#3f93c4" stroke="#17506f"/></svg>
        </div>
      </div>

      <!-- Part seen from the back -->
      <svg class="absolute left-[173px] top-[250px] w-[700px] h-[80px]" viewBox="416 376 700 80">
        <path d="M418 447L418 417C419 398 434 383 452 383C468 382 480 384 500 385.500C520 387.500 533 388.500 560 390C590 391 625 391 653 390.700C675 390.300 700 387.500 725 385.500C745 384 760 383 773 383C790 384.500 808 386.500 827 388C850 390 870 391 893 390.700C915 391.300 940 391 957 390.700C980 390 1000 388.500 1017 387C1035 385.500 1058 383 1073 383C1095 385 1109 398 1111 413V447C1111 449 1110 450 1108 450C1095 450 1065 447.500 1037 446C1020 445 1005 444.500 985 444.200C965 444 955 443.500 940 443.500C925 444 900 444.200 870 444.500C850 446 835 447.500 820 448C805 449.500 790 450 777 450C765 450 758 449.500 750 449C730 447.500 715 446 700 445C675 443.500 655 443 633 443C610 443 585 443 560 443C530 444 505 445 483 446C460 447.500 440 449.500 427 450H421C419 450 418 449 418 447Z" fill="#656875" stroke="#111" stroke-width="1.500"/>
        <rect x="507" y="397.500" width="6" height="14" fill="#dcdee3" stroke="#111"/>
        <rect x="772" y="398.500" width="6" height="14" rx="1" fill="#dcdee3" stroke="#111"/>
        <rect x="1031" y="397.500" width="6" height="14" fill="#dcdee3" stroke="#111"/>
      </svg>

      <!-- Triad -->
      <div class="absolute left-[3px] top-[440px] w-[42px] h-[50px]">
        <svg class="w-[42px] h-[50px]" viewBox="0 0 42 50">
          <text x="37" y="9" text-anchor="middle" font-size="9" font-family="DejaVu Sans" fill="#1f7a25">Y</text>
          <path d="M35.500 20H39V42H35.500Z" fill="#6fb56e" stroke="#1c6a24"/>
          <path d="M37.250 14L41 21H33.500Z" fill="#14601d"/>
          <path d="M14 41H37V45H14Z" fill="#dd7b7b" stroke="#b01f1f"/>
          <path d="M7 43L15 39V47Z" fill="#b51c1c"/>
          <text x="3" y="46" text-anchor="middle" font-size="9" font-family="DejaVu Sans" fill="#d81e1e">X</text>
          <path d="M34 46H38" stroke="#2030c8" stroke-width="1.500"/>
          <circle cx="39" cy="44" r="2" fill="#fff"/>
        </svg>
      </div>

      <span class="absolute left-[10px] top-[526px] text-[12px] font-bold tracking-[0.5px] text-[#222] font-['DejaVu_Sans',sans-serif]">*Back</span>
    </div>
  </main>

  <!-- Model tabs -->
  <div class="h-[16px] shrink-0 flex border-t border-[#8c8c8c] bg-[#fafafa] leading-[13px]">
    <div class="w-[64px] ml-[27px] flex bg-[#bdbdbd] border-r border-[#999]">
      <div class="flex-1 flex items-center justify-center border-r border-[#aaa]"><svg class="w-[7px] h-[8px]" viewBox="0 0 7 8" fill="#999"><path d="M0 0H1.500V8H0ZM7 0V8L2 4Z"/></svg></div>
      <div class="flex-1 flex items-center justify-center border-r border-[#aaa]"><svg class="w-[5px] h-[8px]" viewBox="0 0 5 8" fill="#999"><path d="M5 0V8L0 4Z"/></svg></div>
      <div class="flex-1 flex items-center justify-center border-r border-[#aaa]"><svg class="w-[5px] h-[8px]" viewBox="0 0 5 8" fill="#999"><path d="M0 0V8L5 4Z"/></svg></div>
      <div class="flex-1 flex items-center justify-center"><svg class="w-[7px] h-[8px]" viewBox="0 0 7 8" fill="#999"><path d="M7 0H5.500V8H7ZM0 0V8L5 4Z"/></svg></div>
    </div>
    <div class="w-[57px] pl-[12px] font-bold bg-white tracking-[0.2px]">Model</div>
    <div class="w-[68px] pl-[10px] bg-[#d0d0d0] border-x border-[#888] tracking-[-0.2px]">3D Views</div>
    <div class="w-[108px] pl-[9px] bg-[#d0d0d0] border-r border-[#888]">Motion Study 1</div>
  </div>

  <!-- Status bar -->
  <footer class="h-[19px] shrink-0 flex items-center bg-[#f5f5f5] border-t border-[#cfcfcf] pl-[1px] whitespace-nowrap">
    <span class="w-[1049px] tracking-[-0.17px]">SOLIDWORKS Premium 2017 x64 Edition</span>
    <div class="w-[1px] h-full bg-[#d0d0d0]"></div>
    <div class="w-[1px] h-full ml-[6px] bg-[#d0d0d0]"></div>
    <span class="w-[70px] pl-[3px]">Editing Part</span>
    <div class="w-[1px] h-full bg-[#d0d0d0]"></div>
    <div class="w-[1px] h-full ml-[15px] bg-[#d0d0d0]"></div>
    <span class="w-[85px] pl-[31px]">MMGS</span>
    <svg class="w-[6px] h-[4px] text-[#333] rotate-180 shrink-0"><use href="#caret"/></svg>
    <svg class="w-[18px] h-[14px] ml-[66px] shrink-0" viewBox="0 0 18 14"><path d="M1 5L10 1L17 6V9L8 13L1 8Z" fill="#e8e8e8" stroke="#444"/><path d="M1 5L8 10L17 6M8 10V13" fill="none" stroke="#444"/><path d="M6 5H11" stroke="#444" stroke-width="2"/></svg>
    <svg class="w-[10px] h-[10px] ml-[8px] shrink-0" viewBox="0 0 10 10" fill="#bbb"><rect x="7" y="1" width="2" height="2"/><rect x="4" y="4" width="2" height="2"/><rect x="7" y="4" width="2" height="2"/><rect x="1" y="7" width="2" height="2"/><rect x="4" y="7" width="2" height="2"/><rect x="7" y="7" width="2" height="2"/></svg>
  </footer>
</div>
</body>
</html>
